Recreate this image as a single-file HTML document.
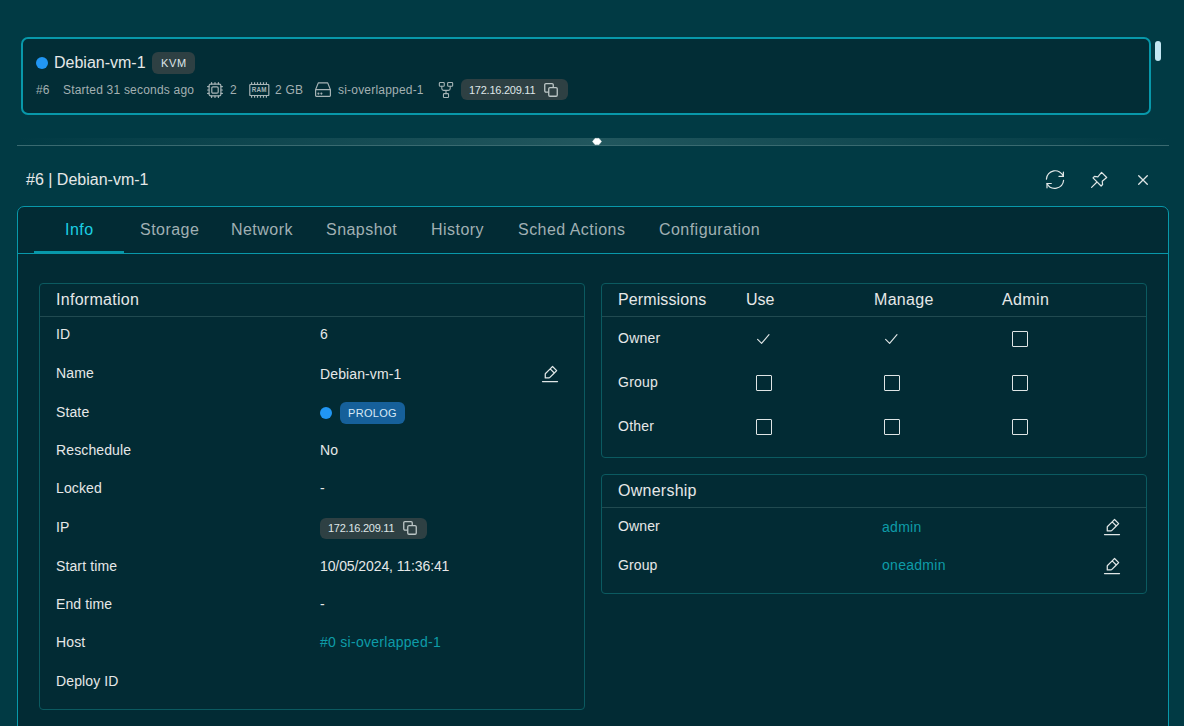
<!DOCTYPE html>
<html><head><meta charset="utf-8">
<style>
*{box-sizing:border-box;margin:0;padding:0}
html,body{width:1184px;height:726px;overflow:hidden}
body{background:#013a44;font-family:"Liberation Sans",sans-serif;color:#e6e8e8;position:relative}
.abs{position:absolute;white-space:nowrap}
svg{position:absolute;overflow:visible}
#card{position:absolute;left:21px;top:37px;width:1130px;height:78px;border:2px solid #0898aa;border-radius:7px;background:#022d36}
#thumb{position:absolute;left:1155px;top:41px;width:6px;height:20px;border-radius:3px;background:#c4e7f3}
.dot{position:absolute;width:12px;height:12px;border-radius:50%;background:#2196f3}
.badge{position:absolute;height:22px;border-radius:6px;background:#2e4043}
.muted{color:#a3b0b2;font-size:12px;letter-spacing:.2px}
#band{position:absolute;left:17px;top:138px;width:1152px;height:7px;background:linear-gradient(90deg,rgba(60,110,115,0) 0%,rgba(60,110,115,.55) 50%,rgba(60,110,115,0) 100%)}
#bline{position:absolute;left:17px;top:145px;width:1152px;height:1px;background:#3a6a70}
#tabs{position:absolute;left:17px;top:206px;width:1152px;height:600px;border:1px solid #0898aa;border-radius:7px;background:#022b34}
#tabline{position:absolute;left:18px;top:253px;width:1150px;height:1px;background:#0898aa}
#ul{position:absolute;left:34px;top:251px;width:90px;height:3px;background:#0898aa}
.tab{position:absolute;top:220px;font-size:16px;letter-spacing:.457px;color:#a0b0b3;line-height:19px}
.panel{position:absolute;border:1px solid #0b5a60;border-radius:4px}
.ph{position:absolute;height:1px;background:#214a50}
.h16{font-size:16px;line-height:19px}
.ph16{letter-spacing:.25px}
.t14{font-size:14px;line-height:17px;letter-spacing:.12px}
.link{color:#0e9ca8;letter-spacing:.28px}
.cb{position:absolute;width:16px;height:16px;border:1.5px solid #dfe5e5;border-radius:1px}
</style></head><body>

<div id="card"></div>
<div id="thumb"></div>
<div class="dot" style="left:36px;top:57px"></div>
<div class="abs h16" style="left:54px;top:53px">Debian-vm-1</div>
<div class="badge" style="left:152px;top:52px;width:43px"></div>
<div class="abs" style="left:161px;top:57px;font-size:11px;line-height:13px;letter-spacing:.7px;color:#dfe6e8">KVM</div>

<div class="abs muted" style="left:36px;top:83px;line-height:14px">#6</div>
<div class="abs muted" style="left:63px;top:83px;line-height:14px">Started 31 seconds ago</div>
<!-- cpu icon -->
<svg style="left:207px;top:82px" width="16" height="16" viewBox="0 0 16 16" fill="none" stroke="#a7b4b6" stroke-width="1.2" stroke-linecap="round" stroke-linejoin="round">
<rect x="2.1" y="2.1" width="11.8" height="11.8" rx="1.6"/>
<rect x="4.8" y="4.8" width="6.4" height="6.4" rx="1.2"/>
<path d="M4.6 .6v1.4M8 .6v1.4M11.4 .6v1.4M4.6 14v1.4M8 14v1.4M11.4 14v1.4M.6 4.6h1.4M.6 8h1.4M.6 11.4h1.4M14 4.6h1.4M14 8h1.4M14 11.4h1.4"/>
</svg>
<div class="abs muted" style="left:230px;top:83px;line-height:14px">2</div>
<!-- ram icon -->
<svg style="left:249px;top:82px" width="21" height="16" viewBox="0 0 21 16" fill="none" stroke="#a7b4b6" stroke-width="1.2">
<rect x="0.8" y="2.5" width="19" height="11" rx=".6"/>
<path d="M2.6 .2v2.3M5.6 .2v2.3M8.5 .2v2.3M11.5 .2v2.3M14.5 .2v2.3M17.4 .2v2.3M2.6 13.5v2.3M5.6 13.5v2.3M8.5 13.5v2.3M11.5 13.5v2.3M14.5 13.5v2.3M17.4 13.5v2.3"/>
<text x="10.3" y="10.3" font-family="Liberation Sans" font-size="6.3" font-weight="bold" fill="#a7b4b6" stroke="none" text-anchor="middle" letter-spacing=".2">RAM</text>
</svg>
<div class="abs muted" style="left:275px;top:83px;line-height:14px">2 GB</div>
<!-- hdd icon -->
<svg style="left:314px;top:80px" width="18" height="18" viewBox="0 0 18 18" fill="none" stroke="#a7b4b6" stroke-width="1.2" stroke-linecap="round" stroke-linejoin="round">
<path d="M1.6 9.6L4.3 2.9H13.7L16.4 9.6M1.6 9.6H16.4V15.6a.8.8 0 01-.8.8H2.4a.8.8 0 01-.8-.8z"/>
<circle cx="4.4" cy="13.6" r=".45" fill="#a7b4b6"/><circle cx="7.4" cy="13.6" r=".45" fill="#a7b4b6"/>
</svg>
<div class="abs muted" style="left:338px;top:83px;line-height:14px">si-overlapped-1</div>
<!-- network icon -->
<svg style="left:438px;top:81px" width="16" height="18" viewBox="0 0 16 18" fill="none" stroke="#a7b4b6" stroke-width="1.1" stroke-linecap="round" stroke-linejoin="round">
<rect x="1.35" y="1.55" width="4.9" height="3.7" rx=".8"/>
<rect x="9.65" y="1.55" width="5" height="3.7" rx=".8"/>
<rect x="5.45" y="12.65" width="5.1" height="3.8" rx=".8"/>
<path d="M3.8 5.3V7.6a1.8 1.8 0 001.8 1.8H10.4a1.8 1.8 0 001.8-1.8V5.3M8 9.4V12.6"/>
</svg>
<div class="badge" style="left:461px;top:79px;width:107px;height:21px"></div>
<div class="abs" style="left:469px;top:84px;font-size:11px;line-height:13px;letter-spacing:-.25px;color:#dfe6e8">172.16.209.11</div>
<svg style="left:543px;top:82px" width="16" height="16" viewBox="0 0 16 16" fill="none" stroke="#bcc6c6" stroke-width="1.3" stroke-linejoin="round"><path d="M5.75 10.05H2.95a1.2 1.2 0 01-1.2-1.2V2.85a1.2 1.2 0 011.2-1.2H9.05a1.2 1.2 0 011.2 1.2V5.55"/><rect x="5.75" y="5.55" width="8.5" height="8.7" rx="1.2"/></svg>

<div id="band"></div>
<div id="bline"></div>
<svg style="left:592px;top:138px" width="10" height="7" viewBox="0 0 10 7"><path d="M3 .4h4l2.4 3.1L7 6.6H3L.6 3.5z" fill="#fff" stroke="#fff" stroke-width=".6" stroke-linejoin="round"/></svg>

<div class="abs h16" style="left:26px;top:170px">#6 | Debian-vm-1</div>
<!-- refresh -->
<svg style="left:1043px;top:168px" width="24" height="24" viewBox="0 0 24 24" fill="none" stroke="#e0e6e6" stroke-width="1.2" stroke-linecap="round" stroke-linejoin="round">
<path d="M3.4 11.1A8.8 8.8 0 0120.4 8.4"/>
<path d="M16 8.4H20.4V4.2"/>
<path d="M20.6 12.3A8.8 8.8 0 014 15.5"/>
<path d="M8.3 15.5H4V19.8"/>
</svg>
<!-- pin -->
<svg style="left:1087px;top:168px" width="24" height="24" viewBox="0 0 24 24" fill="none" stroke="#e0e6e6" stroke-width="1.2" stroke-linecap="round" stroke-linejoin="round">
<path d="M9.5 14.5L4.6 19.4"/>
<path d="M6 9.9l8.1 8.1 1.5-1.5-.35-3.3 4.45-3.7-5.15-5.15-3.7 4.45-3.35-.4z"/>
</svg>
<!-- close -->
<svg style="left:1131px;top:168px" width="24" height="24" viewBox="0 0 24 24" fill="none" stroke="#e0e6e6" stroke-width="1.3" stroke-linecap="round">
<path d="M7.7 7.7l8.6 8.6M16.3 7.7l-8.6 8.6"/>
</svg>

<div id="tabs"></div>
<div id="tabline"></div>
<div id="ul"></div>
<div class="tab" style="left:65px;color:#1ccfe4">Info</div>
<div class="tab" style="left:140px">Storage</div>
<div class="tab" style="left:231px">Network</div>
<div class="tab" style="left:326px">Snapshot</div>
<div class="tab" style="left:431px">History</div>
<div class="tab" style="left:518px">Sched Actions</div>
<div class="tab" style="left:659px">Configuration</div>

<!-- Information panel -->
<div class="panel" style="left:39px;top:283px;width:546px;height:427px"></div>
<div class="ph" style="left:40px;top:316px;width:544px"></div>
<div class="abs h16" style="left:56px;top:290px;letter-spacing:.28px">Information</div>

<div class="abs t14" style="left:56px;top:326px">ID</div>
<div class="abs t14" style="left:320px;top:326px">6</div>
<div class="abs t14" style="left:56px;top:365px">Name</div>
<div class="abs t14" style="left:320px;top:366px">Debian-vm-1</div>
<svg style="left:540px;top:364px" width="20" height="20" viewBox="0 0 24 24" fill="none" stroke="#e0e6e6" stroke-width="1.5" stroke-linecap="round" stroke-linejoin="round">
<path d="M3 21h18M12.222 5.828L15.05 3 20 7.95l-2.828 2.828m-4.95-4.95l-5.607 5.607a1 1 0 00-.293.707v4.536h4.536a1 1 0 00.707-.293l5.607-5.607m-4.95-4.95l4.95 4.95"/>
</svg>
<div class="abs t14" style="left:56px;top:404px">State</div>
<div class="dot" style="left:320px;top:407px"></div>
<div class="badge" style="left:340px;top:402px;width:65px;background:#16609a"></div>
<div class="abs" style="left:348px;top:407px;font-size:11px;line-height:13px;letter-spacing:.3px;color:#d6e8f6">PROLOG</div>
<div class="abs t14" style="left:56px;top:442px">Reschedule</div>
<div class="abs t14" style="left:320px;top:442px">No</div>
<div class="abs t14" style="left:56px;top:480px">Locked</div>
<div class="abs t14" style="left:320px;top:480px">-</div>
<div class="abs t14" style="left:56px;top:519px">IP</div>
<div class="badge" style="left:320px;top:518px;width:107px;height:21px"></div>
<div class="abs" style="left:328px;top:522px;font-size:11px;line-height:13px;letter-spacing:-.25px;color:#dfe6e8">172.16.209.11</div>
<svg style="left:402px;top:520px" width="16" height="16" viewBox="0 0 16 16" fill="none" stroke="#bcc6c6" stroke-width="1.3" stroke-linejoin="round"><path d="M5.75 10.05H2.95a1.2 1.2 0 01-1.2-1.2V2.85a1.2 1.2 0 011.2-1.2H9.05a1.2 1.2 0 011.2 1.2V5.55"/><rect x="5.75" y="5.55" width="8.5" height="8.7" rx="1.2"/></svg>
<div class="abs t14" style="left:56px;top:558px">Start time</div>
<div class="abs t14" style="left:320px;top:558px;letter-spacing:-.1px">10/05/2024, 11:36:41</div>
<div class="abs t14" style="left:56px;top:596px">End time</div>
<div class="abs t14" style="left:320px;top:596px">-</div>
<div class="abs t14" style="left:56px;top:634px">Host</div>
<div class="abs t14 link" style="left:320px;top:634px">#0 si-overlapped-1</div>
<div class="abs t14" style="left:56px;top:673px">Deploy ID</div>

<!-- Permissions panel -->
<div class="panel" style="left:601px;top:283px;width:546px;height:175px"></div>
<div class="ph" style="left:602px;top:316px;width:544px"></div>
<div class="abs h16" style="left:618px;top:290px;letter-spacing:.1px">Permissions</div>
<div class="abs h16" style="left:746px;top:290px">Use</div>
<div class="abs h16" style="left:874px;top:290px;letter-spacing:.3px">Manage</div>
<div class="abs h16" style="left:1002px;top:290px;letter-spacing:.4px">Admin</div>
<div class="abs t14" style="left:618px;top:330px;letter-spacing:.25px">Owner</div>
<div class="abs t14" style="left:618px;top:374px;letter-spacing:.25px">Group</div>
<div class="abs t14" style="left:618px;top:418px;letter-spacing:.25px">Other</div>
<svg style="left:755px;top:331px" width="16" height="16" viewBox="0 0 16 16" fill="none" stroke="#dfe5e5" stroke-width="1.15" stroke-linecap="round" stroke-linejoin="round"><path d="M2.6 8.4l4 3.9 7.4-8.7"/></svg>
<svg style="left:883px;top:331px" width="16" height="16" viewBox="0 0 16 16" fill="none" stroke="#dfe5e5" stroke-width="1.15" stroke-linecap="round" stroke-linejoin="round"><path d="M2.6 8.4l4 3.9 7.4-8.7"/></svg>
<div class="cb" style="left:1012px;top:331px"></div>
<div class="cb" style="left:756px;top:375px"></div>
<div class="cb" style="left:884px;top:375px"></div>
<div class="cb" style="left:1012px;top:375px"></div>
<div class="cb" style="left:756px;top:419px"></div>
<div class="cb" style="left:884px;top:419px"></div>
<div class="cb" style="left:1012px;top:419px"></div>

<!-- Ownership panel -->
<div class="panel" style="left:601px;top:474px;width:546px;height:120px"></div>
<div class="ph" style="left:602px;top:507px;width:544px"></div>
<div class="abs h16" style="left:618px;top:481px;letter-spacing:.25px">Ownership</div>
<div class="abs t14" style="left:618px;top:518px">Owner</div>
<div class="abs t14 link" style="left:882px;top:519px">admin</div>
<div class="abs t14" style="left:618px;top:557px">Group</div>
<div class="abs t14 link" style="left:882px;top:557px">oneadmin</div>
<svg style="left:1102px;top:517px" width="20" height="20" viewBox="0 0 24 24" fill="none" stroke="#e0e6e6" stroke-width="1.5" stroke-linecap="round" stroke-linejoin="round">
<path d="M3 21h18M12.222 5.828L15.05 3 20 7.95l-2.828 2.828m-4.95-4.95l-5.607 5.607a1 1 0 00-.293.707v4.536h4.536a1 1 0 00.707-.293l5.607-5.607m-4.95-4.95l4.95 4.95"/>
</svg>
<svg style="left:1102px;top:556px" width="20" height="20" viewBox="0 0 24 24" fill="none" stroke="#e0e6e6" stroke-width="1.5" stroke-linecap="round" stroke-linejoin="round">
<path d="M3 21h18M12.222 5.828L15.05 3 20 7.95l-2.828 2.828m-4.95-4.95l-5.607 5.607a1 1 0 00-.293.707v4.536h4.536a1 1 0 00.707-.293l5.607-5.607m-4.95-4.95l4.95 4.95"/>
</svg>

</body></html>
